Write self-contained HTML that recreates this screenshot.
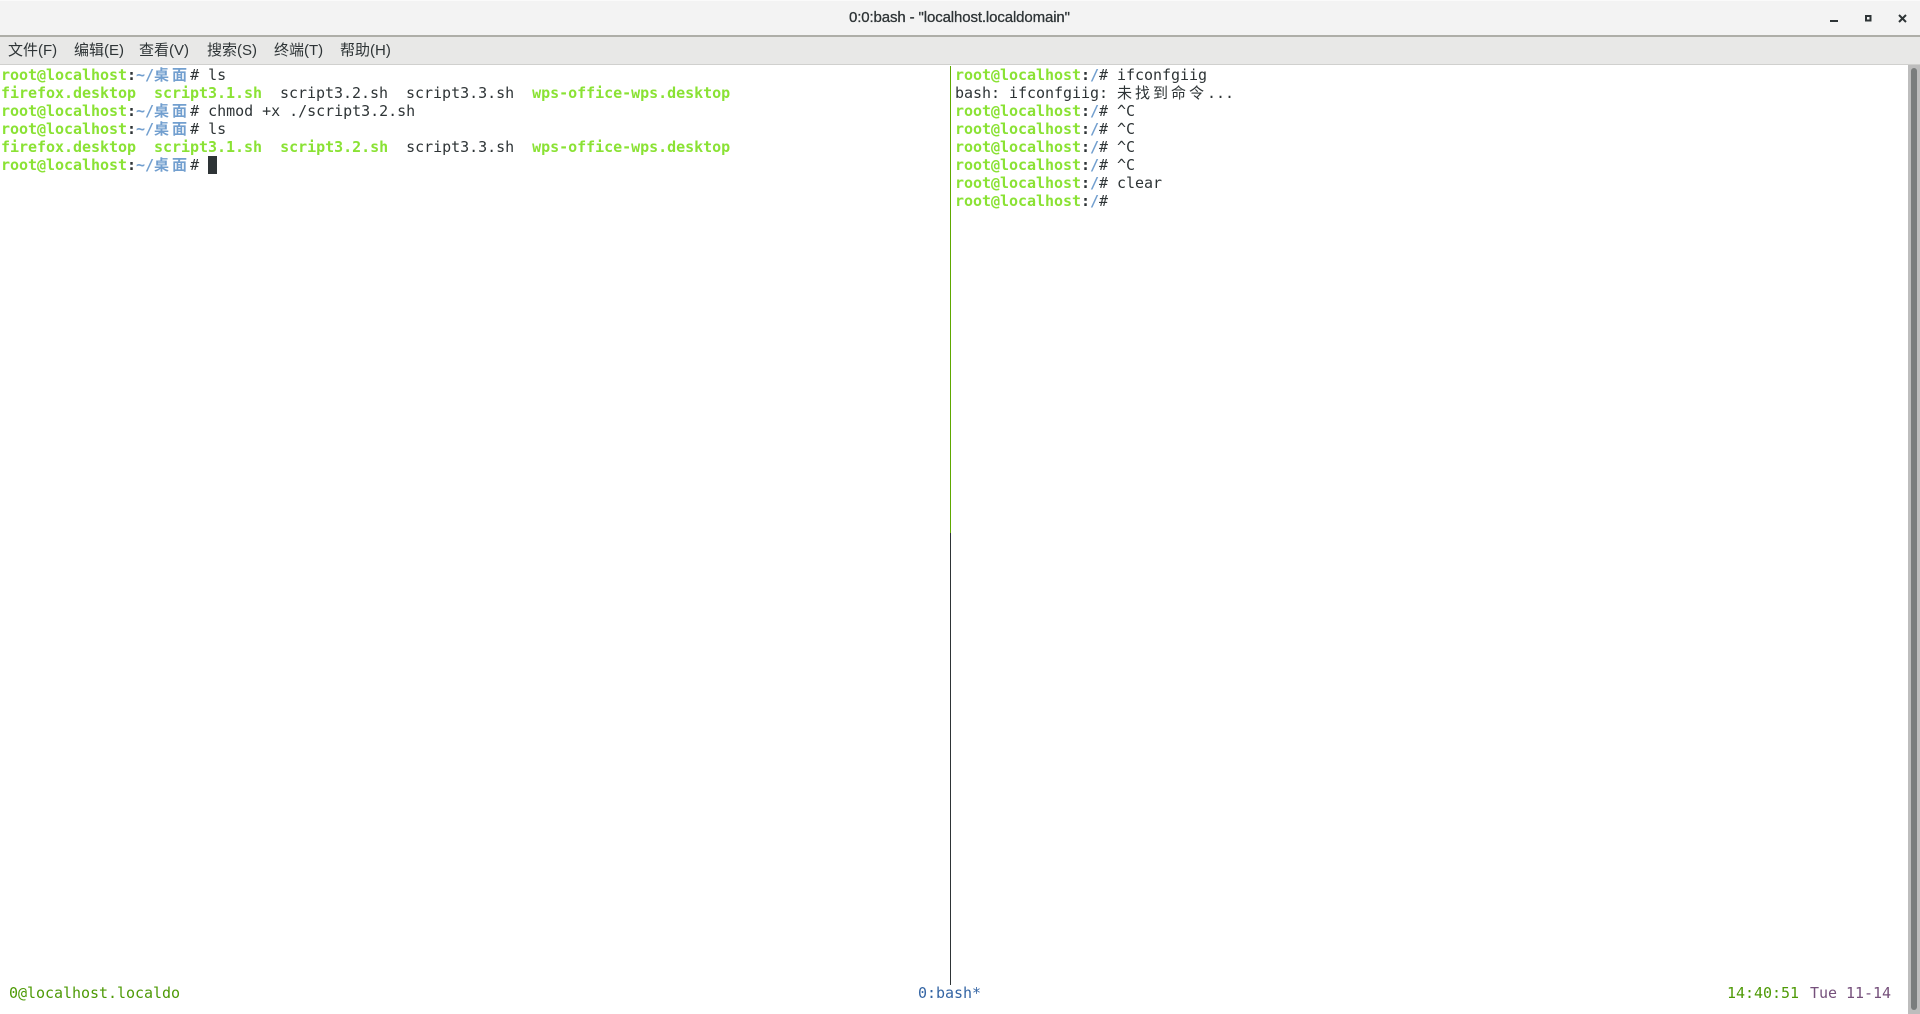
<!DOCTYPE html>
<html><head><meta charset="utf-8"><style>
html,body{margin:0;padding:0;width:1920px;height:1014px;overflow:hidden;background:#fff}
.a{position:absolute}
pre{position:absolute;margin:0;font:15px/18px "DejaVu Sans Mono",monospace;letter-spacing:-.03px;color:#2e3436;white-space:pre}
b.g{color:#8ae234;font-weight:700}
b.c{color:#2e3436;font-weight:700}
b.u{color:#729fcf;font-weight:700}
b.u i,i.z{font-style:normal;font-family:"Noto Sans CJK SC","WenQuanYi Zen Hei",sans-serif;letter-spacing:3px}
#menu span{position:absolute;top:51px;transform:translateY(-50%);font:15px/20px "Liberation Sans","Noto Sans CJK SC",sans-serif;color:#2e3436;white-space:pre}
</style></head><body>
<div class="a" style="left:0;top:0;width:1920px;height:35px;background:#f3f3f3;border-top:1px solid #fafafa;box-sizing:border-box"></div>
<div class="a" style="left:0;top:35px;width:1920px;height:2px;background:#aeaea8"></div>
<div class="a" style="left:0;top:37px;width:1920px;height:27px;background:#e8e8e7"></div>
<div class="a" style="left:0;top:64px;width:1920px;height:1px;background:#d0d0ce"></div>
<div class="a" style="left:849px;top:8px;font:15px/20px 'Liberation Sans',sans-serif;letter-spacing:-.12px;-webkit-text-stroke:.3px #2e3436;color:#2e3436;white-space:pre">0:0:bash - "localhost.localdomain"</div>
<svg class="a" style="left:1820px;top:5px" width="100" height="24" fill="none" stroke="#2e3436" stroke-width="2">
<path d="M10 16H18"/><rect x="46" y="11" width="4.5" height="4.5"/><path d="M79 10L86 17M86 10L79 17"/></svg>
<div id="menu">
<span style="left:8px">文件(F)</span><span style="left:74px">编辑(E)</span><span style="left:139px">查看(V)</span><span style="left:207px">搜索(S)</span><span style="left:274px">终端(T)</span><span style="left:340px">帮助(H)</span>
</div>
<pre style="left:1px;top:66px"><b class="g">root@localhost</b><b class="c">:</b><b class="u">~/<i>桌面</i></b># ls
<b class="g">firefox.desktop</b>  <b class="g">script3.1.sh</b>  script3.2.sh  script3.3.sh  <b class="g">wps-office-wps.desktop</b>
<b class="g">root@localhost</b><b class="c">:</b><b class="u">~/<i>桌面</i></b># chmod +x ./script3.2.sh
<b class="g">root@localhost</b><b class="c">:</b><b class="u">~/<i>桌面</i></b># ls
<b class="g">firefox.desktop</b>  <b class="g">script3.1.sh</b>  <b class="g">script3.2.sh</b>  script3.3.sh  <b class="g">wps-office-wps.desktop</b>
<b class="g">root@localhost</b><b class="c">:</b><b class="u">~/<i>桌面</i></b># </pre>
<div class="a" style="left:208px;top:156px;width:9px;height:18px;background:#2e3436"></div>
<div class="a" style="left:950px;top:66px;width:1px;height:467px;background:#5fa800"></div>
<div class="a" style="left:950px;top:533px;width:1px;height:452px;background:#2e3436"></div>
<pre style="left:955px;top:66px"><b class="g">root@localhost</b><b class="c">:</b><b class="u">/</b># ifconfgiig
bash: ifconfgiig: <i class="z">未找到命令</i>...
<b class="g">root@localhost</b><b class="c">:</b><b class="u">/</b># ^C
<b class="g">root@localhost</b><b class="c">:</b><b class="u">/</b># ^C
<b class="g">root@localhost</b><b class="c">:</b><b class="u">/</b># ^C
<b class="g">root@localhost</b><b class="c">:</b><b class="u">/</b># ^C
<b class="g">root@localhost</b><b class="c">:</b><b class="u">/</b># clear
<b class="g">root@localhost</b><b class="c">:</b><b class="u">/</b>#</pre>
<pre style="left:9px;top:984px;color:#4e9a06">0@localhost.localdo</pre>
<pre style="left:918px;top:984px;color:#3465a4">0:bash*</pre>
<pre style="left:1727px;top:984px;color:#4e9a06">14:40:51 <span style="color:#75507b;margin-left:2px">Tue 11-14</span></pre>
<div class="a" style="left:1908px;top:65px;width:12px;height:949px;background:#bdbdbd"></div>
<div class="a" style="left:1911px;top:68px;width:6px;height:942px;background:#7a7d7d;border-radius:3px"></div>
</body></html>
